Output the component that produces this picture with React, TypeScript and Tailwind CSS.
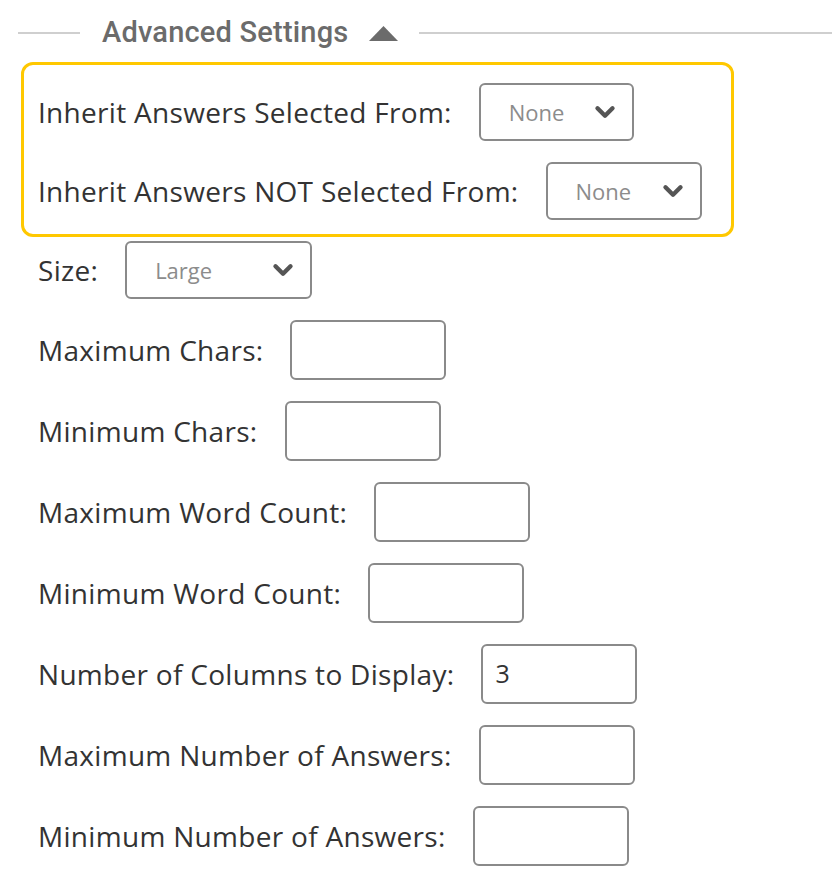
import { ChevronDown } from "lucide-react";

// Select box with placeholder text and chevron
const SelectBox = ({ value, width }: { value: string; width: string }) => {
  return (
    <div
      className={`flex items-center justify-between h-[58px] ${width} border-2 border-[#8a8a8a] rounded-[6px] pl-[28px] pr-[12px] bg-white`}
    >
      <span className="text-[22px] text-[#8c8c8c]">{value}</span>
      <ChevronDown className="w-[30px] h-[30px] text-[#555]" strokeWidth={3.5} />
    </div>
  );
};

// Plain text input
const TextBox = ({ value = "" }: { value?: string }) => {
  return (
    <div className="flex items-center h-[60px] w-[156px] border-2 border-[#8a8a8a] rounded-[6px] px-[12px] bg-white text-[25px] text-[#333]">
      {value}
    </div>
  );
};

const Row = ({ label, children }: { label: string; children: React.ReactNode }) => {
  return (
    <div className="flex items-center gap-[27px]">
      <span className="text-[28px] tracking-[0.3px] text-[#333] whitespace-nowrap">{label}</span>
      {children}
    </div>
  );
};

const inputs = [
  { label: "Maximum Chars:" },
  { label: "Minimum Chars:" },
  { label: "Maximum Word Count:" },
  { label: "Minimum Word Count:" },
  { label: "Number of Columns to Display:", value: "3" },
  { label: "Maximum Number of Answers:" },
  { label: "Minimum Number of Answers:" },
];

export default function App() {
  return (
    <div className="w-[832px] h-[895px] bg-white overflow-hidden font-['Open_Sans',sans-serif]">
      {/* Section header */}
      <div className="flex items-center h-[62px] pt-[4px] pl-[18px]">
        <div className="w-[62px] h-[2px] bg-[#cfcfcf]" />
        <span className="ml-[22px] text-[29px] font-medium tracking-[0.2px] text-[#6b6b6b] font-['Roboto',sans-serif]">
          Advanced Settings
        </span>
        <svg className="ml-[20px] w-[31px] h-[17px]" viewBox="0 0 31 17">
          <path d="M15.5 1 L30 16 L1 16 Z" fill="#6b6b6b" />
        </svg>
        <div className="ml-[20px] flex-1 h-[2px] bg-[#cfcfcf]" />
      </div>

      {/* Highlighted inherit settings */}
      <div className="ml-[21px] w-[713px] border-[3px] border-[#ffc800] rounded-[12px] pt-[18px] pb-[14px] pl-[14px] flex flex-col gap-[21px]">
        <Row label="Inherit Answers Selected From:">
          <SelectBox value="None" width="w-[155px]" />
        </Row>
        <Row label="Inherit Answers NOT Selected From:">
          <SelectBox value="None" width="w-[156px]" />
        </Row>
      </div>

      {/* Other settings */}
      <div className="pl-[38px] pt-[4px] flex flex-col gap-[21px]">
        <Row label="Size:">
          <SelectBox value="Large" width="w-[187px]" />
        </Row>
        {inputs.map((item) => (
          <Row key={item.label} label={item.label}>
            <TextBox value={item.value} />
          </Row>
        ))}
      </div>
    </div>
  );
}
